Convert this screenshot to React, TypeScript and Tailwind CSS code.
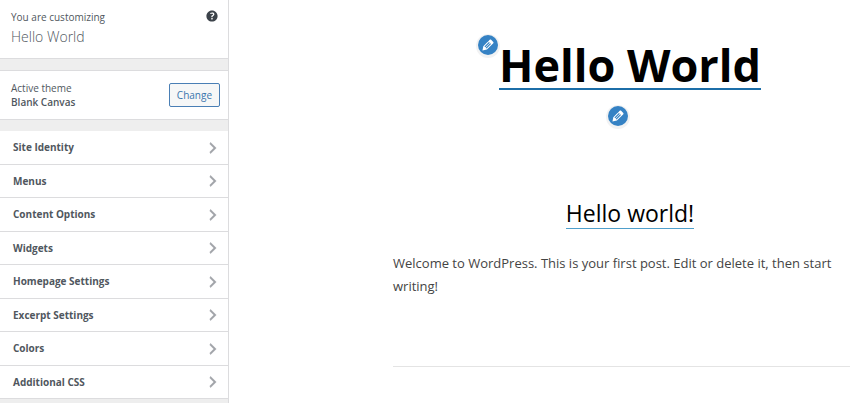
import { clsx } from 'clsx';

const SECTIONS = [
  'Site Identity',
  'Menus',
  'Content Options',
  'Widgets',
  'Homepage Settings',
  'Excerpt Settings',
  'Colors',
  'Additional CSS',
];

function HelpIcon() {
  return (
    <svg viewBox="0 0 20 20" className="size-4 fill-current" aria-hidden="true">
      <path d="M17 10c0-3.87-3.14-7-7-7-3.87 0-7 3.13-7 7s3.13 7 7 7c3.86 0 7-3.13 7-7zm-6.3 1.48H9.14v-.43c0-.38.08-.7.24-.98s.46-.57.88-.89c.41-.29.68-.53.81-.71.14-.18.2-.39.2-.62 0-.25-.09-.44-.28-.58-.19-.13-.45-.19-.79-.19-.58 0-1.25.19-2 .57l-.64-1.28c.87-.49 1.8-.74 2.77-.74.81 0 1.45.2 1.92.58.48.39.71.91.71 1.55 0 .43-.09.8-.29 1.11-.19.32-.57.67-1.11 1.06-.38.28-.61.49-.71.63-.1.15-.15.34-.15.57v.35zm-1.47 2.74c-.18-.17-.27-.42-.27-.73 0-.33.08-.58.26-.75s.43-.25.77-.25c.32 0 .57.09.75.26s.27.42.27.74c0 .3-.09.55-.27.72-.18.18-.43.27-.75.27-.33 0-.58-.09-.76-.26z" />
    </svg>
  );
}

function ChevronIcon() {
  return (
    <svg viewBox="0 0 20 20" className="size-4 fill-[#a0a3a8]" aria-hidden="true">
      <path d="M6 15l5-5-5-5 1-2 7 7-7 7z" stroke="#a0a3a8" strokeWidth="0.6" />
    </svg>
  );
}

// Round shortcut that floats next to an editable part of the preview.
function EditShortcut({ label, className }: { label: string; className: string }) {
  return (
    <button
      type="button"
      aria-label={label}
      className={clsx(
        'absolute flex size-5 items-center justify-center rounded-full bg-[#3582c4] text-white shadow-[0_1px_0_2px_#f1f2f3]',
        className,
      )}
    >
      <svg viewBox="0 0 20 20" className="size-4 fill-current" aria-hidden="true">
        <path d="M13.89 3.39l2.71 2.72c.46.46.42 1.24.03 1.64l-8.01 8.02-5.56 1.16 1.16-5.58s7.6-7.63 7.99-8.03c.39-.39 1.22-.39 1.68.07zm-2.73 2.79l-5.59 5.61 1.11 1.11 5.54-5.65zm-2.97 8.23l5.58-5.6-1.07-1.08-5.59 5.6z" />
      </svg>
    </button>
  );
}

function Sidebar() {
  return (
    <aside className="w-[229px] shrink-0 border-r border-[#dcdcde] bg-[#eeeeee] text-[#50575e]">
      <header className="flex items-start justify-between border-b border-[#dcdcde] bg-white pt-2 pr-2 pb-2.5 pl-[11px]">
        <div>
          <p className="text-[10px] leading-[18px]">You are customizing</p>
          <h1 className="text-[14px] leading-[22px] font-light">Hello World</h1>
        </div>
        <button type="button" aria-label="Help" className="text-[#3c434a]">
          <HelpIcon />
        </button>
      </header>

      <section className="mt-[11px] flex items-center justify-between border-y border-[#dcdcde] bg-white py-2.5 pr-2 pl-[11px]">
        <div className="text-[10px] leading-[14px]">
          <p>Active theme</p>
          <h2 className="font-semibold">Blank Canvas</h2>
        </div>
        <button
          type="button"
          className="h-6 rounded-[2px] border border-[#4a7fb5] bg-[#f6f7f7] px-[7px] text-[10px] text-[#3a75ad]"
        >
          Change
        </button>
      </section>

      <ul className="mt-[11px] bg-white">
        {SECTIONS.map((name) => (
          <li key={name} className="h-[33px] border-b border-[#dcdcde] odd:h-[34px]">
            <button
              type="button"
              className="flex size-full items-center justify-between pr-[7px] pl-[13px] text-[10px] font-bold"
            >
              {name}
              <ChevronIcon />
            </button>
          </li>
        ))}
      </ul>
    </aside>
  );
}

function Preview() {
  return (
    <main className="min-w-0 flex-1 overflow-hidden bg-white pl-[164px]">
      <div className="w-[474px]">
        <header className="relative flex flex-col items-center pt-[41px]">
          <div className="relative">
            <EditShortcut label="Edit site title" className="-top-1.5 -left-[21px]" />
            <a
              href="#home"
              className="block border-b-2 border-[#1c6ea8] text-[45px] leading-[47px] font-bold text-black"
            >
              Hello World
            </a>
          </div>
          <EditShortcut label="Edit menu" className="top-[106px] left-[215px]" />
        </header>

        <article className="mt-[108px] border-b border-[#e4e4e4] pb-[68px]">
          <h2 className="flex justify-center">
            <a
              href="#hello-world"
              className="border-b border-[#4f9fcb] text-[23px] leading-[30px] text-black"
            >
              Hello world!
            </a>
          </h2>
          <p className="mt-[23px] text-[13px] leading-[23px] text-[#444444]">
            Welcome to WordPress. This is your first post. Edit or delete it, then start writing!
          </p>
        </article>
      </div>
    </main>
  );
}

export default function App() {
  return (
    <div className="flex min-h-screen font-['Open_Sans','Noto_Sans',sans-serif]">
      <Sidebar />
      <Preview />
    </div>
  );
}
